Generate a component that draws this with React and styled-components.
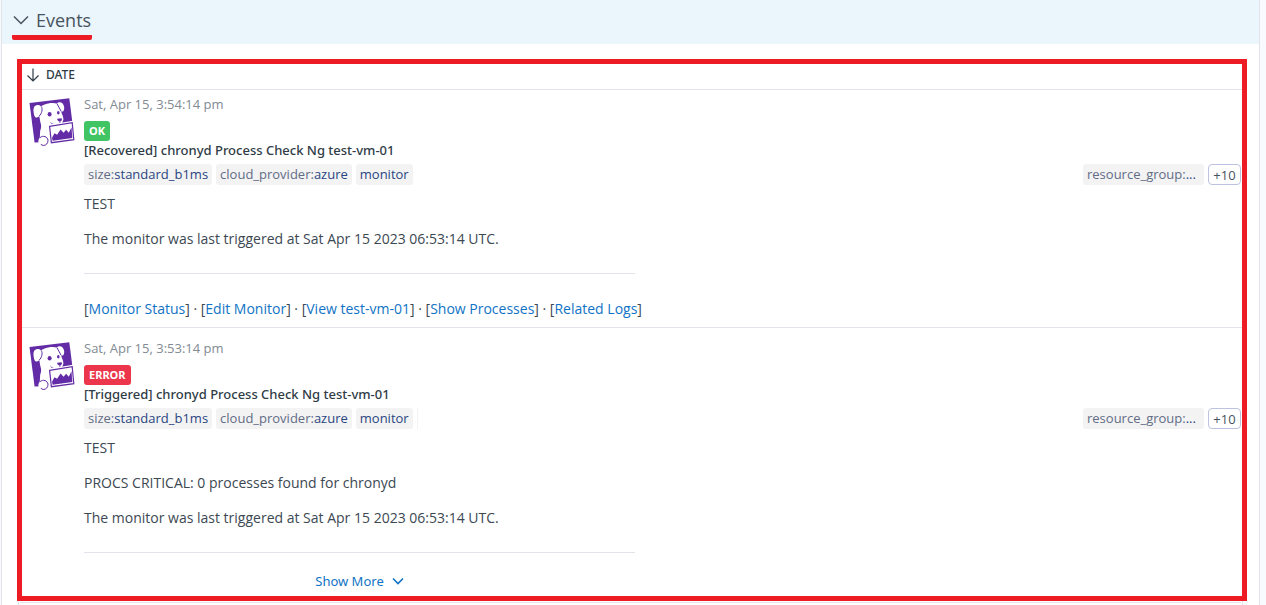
import React from "react";
import styled, { createGlobalStyle } from "styled-components";

const GlobalStyle = createGlobalStyle`
  *, *::before, *::after { box-sizing: border-box; }
  body {
    margin: 0;
    background: #f9fafe;
    color: #2f3c46;
    font: 13px/20px "Noto Sans", sans-serif;
  }
`;

const Panel = styled.section`
  margin: 0 6px 0 1px;
  border: solid #e2e3ec;
  border-width: 0 1px;
  background: #fff;
`;

const PanelHeader = styled.header`
  height: 44px;
  padding: 5px 10px 4px;
  background: #eaf5fc;
`;

const Toggle = styled.button`
  display: inline-flex;
  align-items: center;
  gap: 7px;
  height: 35px;
  padding: 0 1px;
  border: 0;
  border-bottom: 5px solid #ed1c24;
  border-radius: 2px;
  background: none;
  color: #47535d;
  font: 18px/24px "Open Sans", sans-serif;
`;

const EventsFrame = styled.div`
  margin: 15px 12px 0 15px;
  border: 5px solid #ed1c24;
`;

const ColumnHeader = styled.div`
  display: flex;
  height: 26px;
  padding: 0 4px 3px;
  border-bottom: 1px solid #e2e3ec;
`;

const SortButton = styled.button`
  display: inline-flex;
  align-items: center;
  gap: 6px;
  padding: 0;
  border: 0;
  background: none;
  color: #2f3c46;
  font: 500 12px/20px "Noto Sans", sans-serif;
`;

const Event = styled.article`
  display: grid;
  grid-template-columns: 46px minmax(0, 1fr);
  column-gap: 9px;
  padding: ${(p) => (p.$first ? "4px 1px 8px 7px" : "10px 1px 5px 7px")};
  border-bottom: ${(p) => (p.$first ? "1px solid #e2e3ec" : "0")};
`;

const Logo = styled.svg`
  width: 46px;
  height: 50px;
  margin-top: 4px;
`;

const Time = styled.time`
  display: block;
  color: #828b93;
  font-family: "Open Sans", sans-serif;
`;

const Status = styled.span`
  display: block;
  width: fit-content;
  height: 20px;
  margin-top: 7px;
  padding: 0 5px;
  border-radius: 3px;
  background: ${(p) => (p.$error ? "#eb364b" : "#41c464")};
  color: #fff;
  font-size: 11px;
  font-weight: 700;
`;

const Title = styled.h3`
  margin: 0;
  font-size: 13px;
  font-weight: 500;
  line-height: 18px;
`;

const TagRow = styled.div`
  display: flex;
  gap: 4px;
  margin: 5px 0 9px;
`;

const Tag = styled.span`
  height: 21px;
  padding: 0 4px;
  border-radius: 3px;
  background: #f3f3f4;
  color: #626c85;
  font-family: "Open Sans", sans-serif;

  b {
    color: #2a4580;
    font-weight: 400;
  }
`;

const TagSliver = styled.span`
  width: 1px;
  height: 21px;
  background: #f3f3f4;
`;

const HiddenTags = styled.div`
  display: flex;
  gap: 4px;
  margin-left: auto;
`;

const WideTag = styled(Tag)`
  width: 121px;
`;

const MoreTags = styled.button`
  width: 33px;
  height: 21px;
  padding: 0;
  border: 1px solid #bcc2df;
  border-radius: 4px;
  background: #fff;
  color: #47535d;
  font: 13px/18px "Open Sans", sans-serif;
`;

const Message = styled.div`
  width: 551px;
  color: #3c4852;
  font-family: "Open Sans", sans-serif;
  font-size: 14px;

  p { margin: 0 0 15px; }
`;

const Rule = styled.hr`
  height: 1px;
  margin: 24px 0 0;
  border: 0;
  background: #e2e3ec;
`;

const Links = styled.nav`
  margin-top: 25px;
  white-space: nowrap;

  a {
    color: #1173c5;
    text-decoration: none;
  }
`;

const ShowMore = styled.button`
  display: flex;
  align-items: center;
  gap: 8px;
  margin: 18px auto 0;
  padding: 0;
  border: 0;
  background: none;
  color: #1173c5;
  font: 13px/20px "Noto Sans", sans-serif;
`;

const NextRow = styled.div`
  height: 4px;
  margin: 0 16px;
  border: solid #e2e3ec;
  border-width: 0 1px;
  padding-top: 1px;

  &::after {
    content: "";
    display: block;
    height: 1px;
    margin: 0 1px;
    background: #e2e3ec;
  }
`;

const Chevron = ({ width, height, stroke }) => (
  <svg width={width} height={height} viewBox={`0 0 ${width} ${height}`} fill="none" aria-hidden="true">
    <path
      d={`M1 1.5 L${width / 2} ${height - 1.5} L${width - 1} 1.5`}
      stroke="currentColor"
      strokeWidth={stroke}
    />
  </svg>
);

const DogLogo = () => (
  <Logo viewBox="0 0 46 50" aria-hidden="true">
    <path d="M.5 5 40.3 .2 43.6 26 22 44 5.6 44.5Z" fill="#632ca6" />
    <path
      d="M5.2 8.8C7 6.7 10 6.5 12 8.2L15 6.8C19 5.1 24 4.5 28 5.6C29 3.8 31.8 3.6 33.4 5.3C35.4 7.7 36 11.3 34 13.6L32.2 13.4C32.6 16.1 34.6 18.3 34.4 21.6C34.1 24.4 32.4 25.7 30.7 27L20.5 29.5 21.2 44.7 18.5 45.2C17.2 48.2 13 49 10.7 46.6C8.7 44.4 9 41.4 10.8 39.4L11.2 32.5C12.4 29.7 12.5 27.5 11.4 24.5L10.3 18C7.9 20.5 5.9 19.6 5.1 16.9C4.4 13.8 4.1 10.9 5.2 8.8Z"
      fill="#fff"
    />
    <path d="M12.2 8.4C14 10.8 12.8 15.8 10.2 18M28 5.7 32.1 13.3" fill="none" stroke="#632ca6" strokeWidth="1" />
    <ellipse cx="20.6" cy="16.3" rx="2" ry="2.3" fill="#632ca6" />
    <ellipse cx="29.3" cy="14.8" rx="1.3" ry="1.8" fill="#632ca6" />
    <path d="M28.1 20.8 32.7 20.2C33.3 22 32.4 23.3 30.9 23.7 29.3 23.5 28.3 22.5 28.1 20.8Z" fill="#632ca6" />
    <path d="M21.6 24.5C24 27.1 28 27.5 30.9 25.3V23.6" fill="none" stroke="#632ca6" strokeWidth=".9" />
    <path d="M11 39.6C14 37 18.6 38.6 19 42.2C19.2 45.2 17 47.6 14.2 47.5L11.8 46.4" fill="none" stroke="#632ca6" strokeWidth="1" />
    <path d="M18.5 27 44 22.8 44.6 24 45 42.5 21.5 45.6Z" fill="#fff" />
    <path d="M20.6 28.4 43.2 24.7 44.8 41.7 22.4 44.7Z" fill="#fff" stroke="#632ca6" strokeWidth="1.2" />
    <path d="M23 39.8 25.5 35.2 28.1 36.8 31.6 31.5 34.6 34.8 37.1 31.8 39.8 34.7 42.5 29.2 43.3 39.9 23.6 42.7Z" fill="#632ca6" />
  </Logo>
);

const EVENTS = [
  {
    time: "Sat, Apr 15, 3:54:14 pm",
    status: "OK",
    title: "[Recovered] chronyd Process Check Ng test-vm-01",
    lines: ["TEST", "The monitor was last triggered at Sat Apr 15 2023 06:53:14 UTC."],
    links: ["Monitor Status", "Edit Monitor", "View test-vm-01", "Show Processes", "Related Logs"],
  },
  {
    time: "Sat, Apr 15, 3:53:14 pm",
    status: "ERROR",
    title: "[Triggered] chronyd Process Check Ng test-vm-01",
    lines: [
      "TEST",
      "PROCS CRITICAL: 0 processes found for chronyd",
      "The monitor was last triggered at Sat Apr 15 2023 06:53:14 UTC.",
    ],
  },
];

const EventItem = ({ event, first }) => (
  <Event $first={first}>
    <DogLogo />
    <div>
      <Time>{event.time}</Time>
      <Status $error={event.status === "ERROR"}>{event.status}</Status>
      <Title>{event.title}</Title>
      <TagRow>
        <Tag>size:<b>standard_b1ms</b></Tag>
        <Tag>cloud_provider:<b>azure</b></Tag>
        <Tag><b>monitor</b></Tag>
        {!first && <TagSliver />}
        <HiddenTags>
          <WideTag>resource_group:<b>...</b></WideTag>
          <MoreTags type="button">+10</MoreTags>
        </HiddenTags>
      </TagRow>
      <Message>
        {event.lines.map((line) => <p key={line}>{line}</p>)}
        <Rule />
        {event.links && (
          <Links>
            {event.links.map((link, i) => (
              <React.Fragment key={link}>
                {i > 0 && " · "}[<a href="#events">{link}</a>]
              </React.Fragment>
            ))}
          </Links>
        )}
        {!event.links && (
          <ShowMore type="button">
            Show More
            <Chevron width={12} height={8} stroke={1.6} />
          </ShowMore>
        )}
      </Message>
    </div>
  </Event>
);

export default function App() {
  return (
    <>
      <GlobalStyle />
      <Panel id="events">
        <PanelHeader>
          <Toggle type="button" aria-expanded="true">
            <Chevron width={16} height={10} stroke={1.5} />
            Events
          </Toggle>
        </PanelHeader>
        <EventsFrame>
          <ColumnHeader>
            <SortButton type="button">
              <svg width="14" height="14" viewBox="0 0 14 14" fill="none" stroke="currentColor" strokeWidth="1.2" aria-hidden="true">
                <path d="M7 .5V13M1.5 7.5 7 13 12.5 7.5" />
              </svg>
              DATE
            </SortButton>
          </ColumnHeader>
          {EVENTS.map((event, i) => <EventItem key={event.time} event={event} first={i === 0} />)}
        </EventsFrame>
        <NextRow />
      </Panel>
    </>
  );
}
